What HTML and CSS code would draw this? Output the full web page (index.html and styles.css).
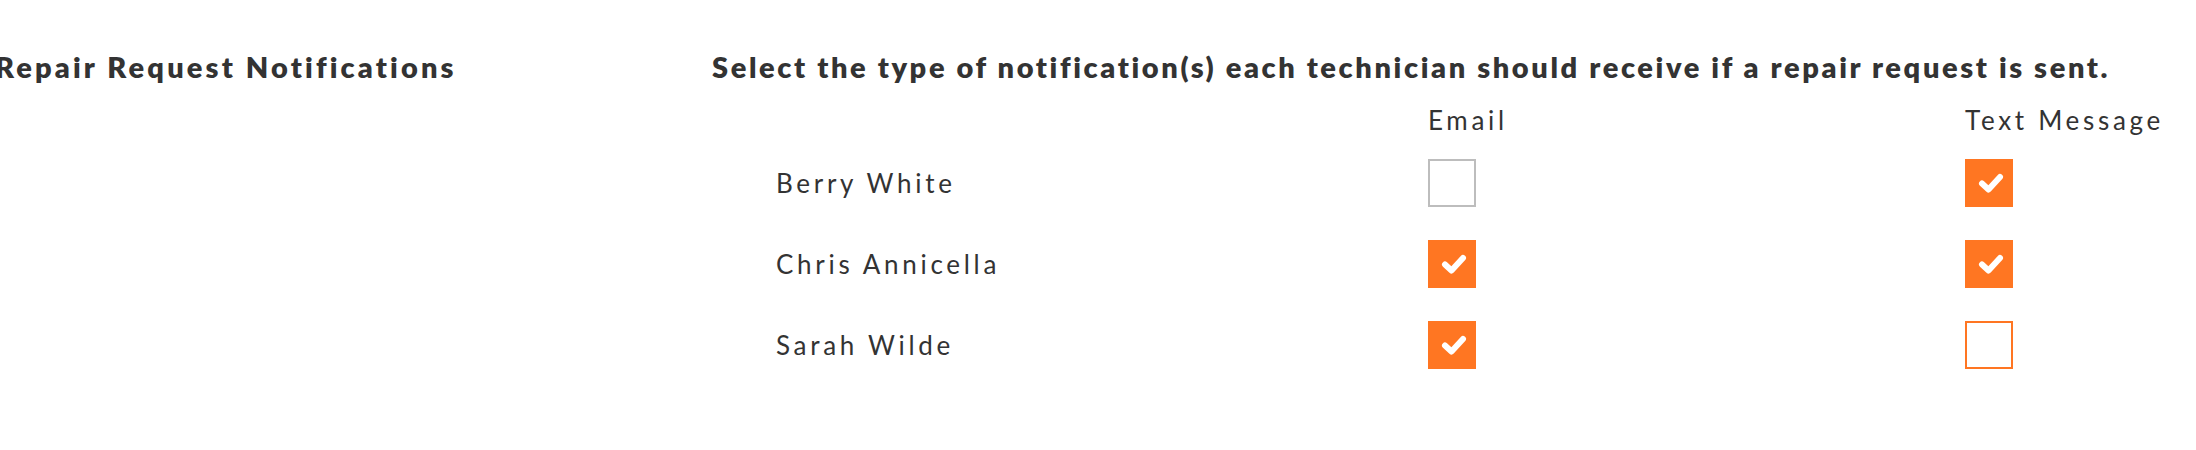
FILE: index.html
```html
<!DOCTYPE html>
<html lang="en">
<head>
    <meta charset="UTF-8">
    <title>Repair Request Notifications</title>
    <link rel="stylesheet" href="styles.css">
</head>
<body>
    <section class="settings">
        <h2 class="settings-title">Repair Request Notifications</h2>
        <div class="settings-body">
            <p class="settings-intro">Select the type of notification(s) each technician should receive if a repair request is sent.</p>
            <div class="notify-grid">
                <span></span>
                <span class="col-label">Email</span>
                <span class="col-label">Text Message</span>

                <span class="tech-name">Berry White</span>
                <span class="box"></span>
                <span class="box checked"><svg viewBox="0 0 48 48"><path d="M17 24.5 L23.5 30.5 L35 18"/></svg></span>

                <span class="tech-name">Chris Annicella</span>
                <span class="box checked"><svg viewBox="0 0 48 48"><path d="M17 24.5 L23.5 30.5 L35 18"/></svg></span>
                <span class="box checked"><svg viewBox="0 0 48 48"><path d="M17 24.5 L23.5 30.5 L35 18"/></svg></span>

                <span class="tech-name">Sarah Wilde</span>
                <span class="box checked"><svg viewBox="0 0 48 48"><path d="M17 24.5 L23.5 30.5 L35 18"/></svg></span>
                <span class="box touched"></span>
            </div>
        </div>
    </section>
</body>
</html>
```

FILE: styles.css
```css
body {
    margin: 0;
    background: #fff;
    color: #333;
    font-family: Lato, "Open Sans", sans-serif;
}

.settings {
    display: grid;
    grid-template-columns: 717px 1fr;
    margin-left: -5px;
    padding-top: 49px;
}

.settings-title,
.settings-intro {
    margin: 0;
    font-size: 29px;
    line-height: 36px;
    font-weight: 800;
    white-space: nowrap;
}

.settings-title {
    letter-spacing: 3.15px;
}

.settings-intro {
    letter-spacing: 2.62px;
}

.notify-grid {
    display: grid;
    grid-template-columns: 652px 537px auto;
    grid-template-rows: auto repeat(3, 48px);
    row-gap: 33px;
    margin: 20px 0 0 64px;
    align-items: center;
}

.col-label,
.tech-name {
    font-size: 26px;
    letter-spacing: 3.7px;
    white-space: nowrap;
}

.col-label {
    line-height: 30px;
    margin-bottom: -9px;
}

.tech-name {
    line-height: 48px;
}

.box {
    width: 48px;
    height: 48px;
    box-sizing: border-box;
    border: 2px solid #bdbdbd;
    background: #fff;
}

.box.touched {
    border-color: #ff7622;
}

.box.checked {
    border: none;
    background: #ff7622;
}

.box svg {
    display: block;
    width: 48px;
    height: 48px;
}

.box svg path {
    fill: none;
    stroke: #fff;
    stroke-width: 6;
    stroke-linecap: round;
    stroke-linejoin: round;
}
```
